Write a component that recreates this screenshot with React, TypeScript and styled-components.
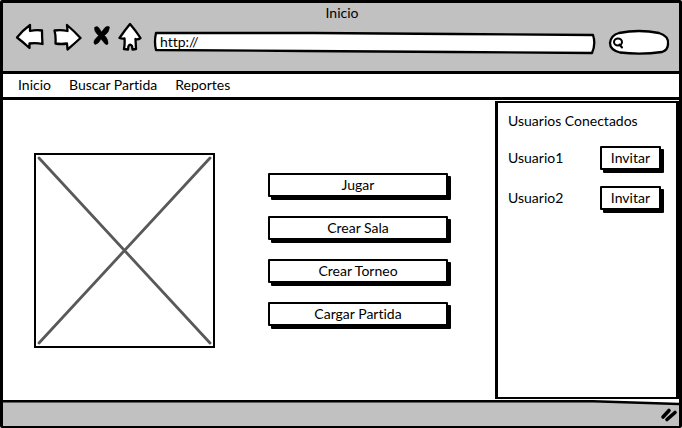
import React from "react";
import styled, { createGlobalStyle } from "styled-components";

const ink = "#000";
const chrome = "#c1c1c1";

const GlobalStyle = createGlobalStyle`
  *, *::before, *::after { box-sizing: border-box; }
  body { margin: 0; background: #fff; }
  body, button, input {
    font-family: Lato, "Open Sans", sans-serif;
    font-size: 14px;
    line-height: 16px;
    font-variant-ligatures: none;
    color: ${ink};
  }
`;

const BrowserWindow = styled.div`
  display: flex;
  flex-direction: column;
  min-height: 100vh;
  border: 3px solid ${ink};
  border-bottom-width: 2px;
  border-radius: 2px;
  overflow: hidden;
`;

const TitleBar = styled.header`
  background: ${chrome};
  border-bottom: 3px solid ${ink};
  padding: 2px 10px 19px 12px;
`;

const Title = styled.h1`
  margin: 0;
  font: inherit;
  text-align: center;
`;

const Toolbar = styled.div`
  display: flex;
  align-items: flex-end;
  height: 31px;
`;

const IconButton = styled.button<{ $gap?: number }>`
  display: block;
  flex: none;
  padding: 0;
  margin: 0 ${(p) => p.$gap ?? 0}px 0 0;
  border: 0;
  background: none;
  line-height: 0;
  cursor: pointer;
`;

const Field = styled.label<{ $grow?: boolean }>`
  position: relative;
  display: flex;
  align-items: center;
  flex: ${(p) => (p.$grow ? "1 1 auto" : "0 0 60px")};
  min-width: 0;
  height: 24px;
  margin-bottom: -2px;
  margin-left: ${(p) => (p.$grow ? 12 : 14)}px;
`;

const FieldOutline = styled.svg`
  position: absolute;
  inset: 0;
  width: 100%;
  height: 100%;
  overflow: visible;
`;

const FieldInput = styled.input<{ $inset: number }>`
  position: relative;
  width: 100%;
  min-width: 0;
  height: 18px;
  padding: 0 8px 2px ${(p) => p.$inset}px;
  border: 0;
  outline: 0;
  background: none;
`;

const SearchGlyph = styled.svg`
  position: absolute;
  left: 3px;
  top: 7px;
`;

const Menu = styled.nav`
  display: flex;
  gap: 18px;
  padding: 3px 15px 4px;
  border-bottom: 3px solid ${ink};
`;

const MenuLink = styled.a`
  color: inherit;
  text-decoration: none;
`;

const Content = styled.div`
  display: flex;
  flex: 1;
`;

const Main = styled.main`
  display: flex;
  flex: 1;
  align-items: flex-start;
  gap: 53px;
  padding: 53px 47px 24px 31px;
`;

const Picture = styled.svg`
  flex: 0 1 181px;
  min-width: 0;
  height: 195px;
  border: 2px solid ${ink};
`;

const Actions = styled.div`
  display: flex;
  flex: 1;
  flex-direction: column;
  gap: 19px;
  padding-top: 20px;
`;

const Button = styled.button`
  height: 24px;
  padding: 0 9px;
  border: 2px solid ${ink};
  border-radius: 1px;
  background: #fff;
  box-shadow: 3px 3px 0 ${ink};
  cursor: pointer;
`;

const Sidebar = styled.aside`
  flex: 0 0 184px;
  margin: 1px 0 1px;
  padding: 10px 15px 10px 10px;
  border: 3px solid ${ink};
  border-top-width: 2px;
  border-bottom-width: 2px;
`;

const SidebarTitle = styled.h2`
  margin: 0 0 17px;
  font: inherit;
`;

const UserList = styled.ul`
  display: flex;
  flex-direction: column;
  gap: 16px;
  margin: 0;
  padding: 0;
  list-style: none;
`;

const UserRow = styled.li`
  display: flex;
  align-items: center;
  justify-content: space-between;
`;

const StatusBar = styled.footer`
  position: relative;
  display: flex;
  justify-content: flex-end;
  align-items: center;
  height: 26px;
  padding: 4px 1px 0 0;
  background: ${chrome};
`;

const StatusEdge = styled.svg`
  position: absolute;
  left: 0;
  top: 0;
  width: 100%;
  height: 6px;
`;

const stroke = {
  stroke: ink,
  strokeWidth: 2.3,
  strokeLinejoin: "round" as const,
  strokeLinecap: "round" as const,
};

const BackIcon = () => (
  <svg width="30" height="30" viewBox="15 22 30 30">
    <path d="M17 37.5 Q23 30 30 25 L30 31 Q36 29.5 42 30.5 Q42 37 42.5 44 Q36 42.5 29.5 43.5 L29.5 48 Q23 42 17 37.5Z" fill="#fff" {...stroke} />
  </svg>
);

const ForwardIcon = () => (
  <svg width="30" height="30" viewBox="52 22 30 30">
    <path d="M54.5 30.5 Q61 29.5 67.5 31 L67 25 Q74 31 80.5 38 Q74 44 67.5 49.5 L67 43.5 Q61 44.5 55.5 43.5 Q56 36 54.5 30.5Z" fill="#fff" {...stroke} />
  </svg>
);

const StopIcon = () => (
  <svg width="20" height="30" viewBox="92 22 20 30">
    <path d="M94.5 27.5 Q97 25.5 99 28 L101.5 32 L105 27.5 Q108 25.5 109.5 27 Q109.5 32 104.5 35.5 Q108.5 39 108 44 Q106 46 103.5 42 L101 39 Q98.5 44 95 44.5 Q93 43 94.5 40 L98.5 35.5 Q94 31.5 94.5 27.5Z" fill={ink} stroke={ink} strokeWidth="0.5" />
  </svg>
);

const HomeIcon = () => (
  <svg width="24" height="30" viewBox="118 22 24 30">
    <path d="M130 24 Q125 30 119.5 38 Q122 39 124.5 38.5 Q125 44 124 49 L128 49.5 L128.5 46 Q130 43.5 132 46 L132.5 49.5 L136 49 L135.5 39 Q138 40 140.5 38 Q136 31 130 24Z" fill="#fff" {...stroke} />
  </svg>
);

const users = ["Usuario1", "Usuario2"];

export default function App() {
  return (
    <>
      <GlobalStyle />
      <BrowserWindow>
        <TitleBar>
          <Title>Inicio</Title>
          <Toolbar>
            <IconButton $gap={7} aria-label="Atrás"><BackIcon /></IconButton>
            <IconButton $gap={10} aria-label="Adelante"><ForwardIcon /></IconButton>
            <IconButton $gap={6} aria-label="Detener"><StopIcon /></IconButton>
            <IconButton aria-label="Página de inicio"><HomeIcon /></IconButton>
            <Field $grow>
              <FieldOutline viewBox="0 0 442 24" preserveAspectRatio="none" aria-hidden="true">
                <path d="M2 3 L160 3 L300 4 L440 5 Q443 14 439 23 L300 22 L150 21 L2 20 Q0 12 2 3Z" fill="#fff" {...stroke} vectorEffect="non-scaling-stroke" />
              </FieldOutline>
              <FieldInput $inset={6} aria-label="Dirección" defaultValue="http://" />
            </Field>
            <Field>
              <FieldOutline viewBox="0 0 60 24" preserveAspectRatio="none" aria-hidden="true">
                <path d="M10 3 Q30 -1 50 3 Q60 6 59 14 Q59 20 53 22 Q32 25 11 22.500 Q1 20 1 13 Q2 5 10 3Z" fill="#fff" {...stroke} />
              </FieldOutline>
              <SearchGlyph width="12" height="13" viewBox="0 0 12 13" aria-hidden="true">
                <ellipse cx="6" cy="5" rx="4" ry="3.500" fill="none" {...stroke} strokeWidth={2} />
                <path d="M7.500 7.500 L10 10.500" {...stroke} strokeWidth={2} />
              </SearchGlyph>
              <FieldInput $inset={18} type="search" aria-label="Buscar" />
            </Field>
          </Toolbar>
        </TitleBar>
        <Menu>
          <MenuLink href="#inicio">Inicio</MenuLink>
          <MenuLink href="#buscar">Buscar Partida</MenuLink>
          <MenuLink href="#reportes">Reportes</MenuLink>
        </Menu>
        <Content>
          <Main>
            <Picture viewBox="0 0 177 191" preserveAspectRatio="none" role="img" aria-label="Imagen">
              <path d="M3 3 L174 188 M174 3 L3 188" fill="none" stroke="#595959" strokeWidth="2.800" strokeLinecap="round" />
            </Picture>
            <Actions>
              <Button>Jugar</Button>
              <Button>Crear Sala</Button>
              <Button>Crear Torneo</Button>
              <Button>Cargar Partida</Button>
            </Actions>
          </Main>
          <Sidebar>
            <SidebarTitle>Usuarios Conectados</SidebarTitle>
            <UserList>
              {users.map((name) => (
                <UserRow key={name}>
                  {name}
                  <Button aria-label={`Invitar a ${name}`}>Invitar</Button>
                </UserRow>
              ))}
            </UserList>
          </Sidebar>
        </Content>
        <StatusBar>
          <StatusEdge viewBox="0 0 676 6" preserveAspectRatio="none" aria-hidden="true">
            <path d="M0 0 H676 V4 L590 2 H0Z" fill="#fff" />
            <path d="M0 1.300 H590 L676 4" fill="none" stroke={ink} strokeWidth="2.600" />
          </StatusEdge>
          <svg width="18" height="16" viewBox="0 0 18 16" aria-hidden="true">
            <path d="M3 10 L9 3.500 M7 12.500 L15 5.500" fill="none" {...stroke} strokeWidth={3.6} />
          </svg>
        </StatusBar>
      </BrowserWindow>
    </>
  );
}
